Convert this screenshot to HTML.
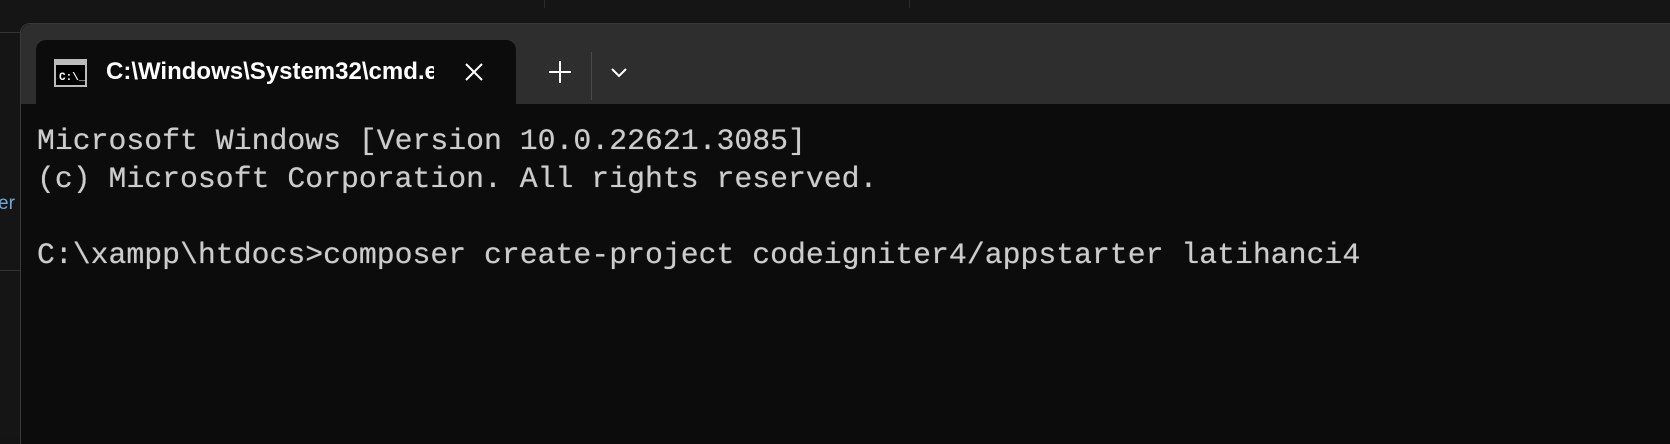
<!DOCTYPE html>
<html><head><meta charset="utf-8"><style>
html,body{margin:0;padding:0;width:1670px;height:436px;overflow:hidden;background:#141414;font-family:"Liberation Sans",sans-serif}
.topline{position:absolute;top:0;left:0;width:1670px;height:23px;background:#151515}
.vl{position:absolute;top:0;height:8px;width:1px;background:#2a2a2a}
.left{position:absolute;left:0;top:23px;width:20px;height:413px;background:#151515}
.hl{position:absolute;left:0;width:20px;height:1px;background:#333}
.er{position:absolute;left:-2px;top:193px;font-size:19px;color:#6fa8dc}
.win{position:absolute;left:20px;top:23px;width:1660px;height:420px;background:#0c0c0c;border-top-left-radius:10px;border-left:1px solid #3a3a3a;border-top:1px solid #3a3a3a}
.bar{position:absolute;left:0;top:0;right:0;height:80px;background:#2e2e2e;border-top-left-radius:10px}
.tab{position:absolute;left:15px;top:16px;width:480px;height:66px;background:#0c0c0c;border-radius:10px 10px 0 0}
.title{position:absolute;left:70px;top:18px;font-size:24px;font-weight:bold;color:#fff;width:328px;overflow:hidden;white-space:nowrap}
.term{position:absolute;left:16px;top:98px;font-family:"Liberation Mono",monospace;font-size:29.8px;line-height:38px;color:#cccccc;white-space:pre;text-shadow:0 0 0.6px #ccc}
</style></head><body>
<div class="topline"></div>
<div class="vl" style="left:544px"></div><div class="vl" style="left:909px"></div>
<div class="left"><div class="hl" style="top:9px"></div><div class="hl" style="top:247px"></div></div>
<div class="er">er</div>
<div class="win">
 <div class="bar"></div>
 <div class="tab">
  <svg style="position:absolute;left:18px;top:19px" width="33" height="28" viewBox="0 0 33 28">
   <rect x="1" y="1" width="31" height="26" fill="#000" stroke="#bbb" stroke-width="2"/>
   <rect x="1" y="1" width="31" height="5" fill="#bbb"/>
   <text x="5" y="21" font-family="Liberation Mono,monospace" font-size="11" font-weight="bold" fill="#fff">C:\_</text>
  </svg>
  <div class="title">C:\Windows\System32\cmd.exe</div>
  <svg style="position:absolute;left:428px;top:22px" width="20" height="20" viewBox="0 0 20 20"><path d="M2 2L18 18M18 2L2 18" stroke="#fff" stroke-width="2"/></svg>
 </div>
 <svg style="position:absolute;left:527px;top:36px" width="24" height="24" viewBox="0 0 24 24"><path d="M12 1V23M1 12H23" stroke="#fff" stroke-width="2"/></svg>
 <div style="position:absolute;left:570px;top:28px;width:1px;height:48px;background:#4a4a4a"></div>
 <svg style="position:absolute;left:589px;top:42px" width="18" height="12" viewBox="0 0 18 12"><path d="M2 3L9 10L16 3" stroke="#fff" stroke-width="2" fill="none"/></svg>
 <div class="term">Microsoft Windows [Version 10.0.22621.3085]
(c) Microsoft Corporation. All rights reserved.

C:\xampp\htdocs>composer create-project codeigniter4/appstarter latihanci4</div>
</div>
</body></html>
